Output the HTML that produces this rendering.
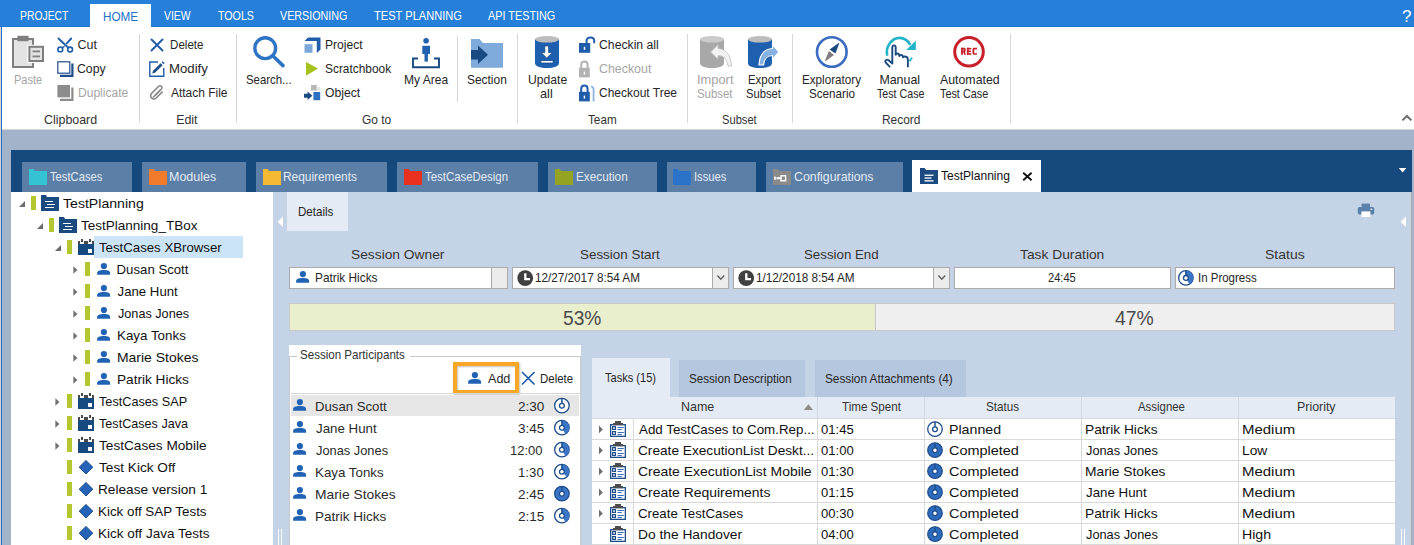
<!DOCTYPE html>
<html><head><meta charset="utf-8">
<style>
*{box-sizing:border-box;margin:0;padding:0}
html,body{width:1414px;height:545px;overflow:hidden;background:#a3b3c9;font-family:"Liberation Sans",sans-serif;color:#262626}
.a{position:absolute;display:block}
.t{position:absolute;white-space:nowrap;line-height:1}
</style></head><body>
<div class="a" style="left:0px;top:0px;width:1414px;height:26px;background:#2680da;"></div><div class="a" style="left:0px;top:26px;width:1414px;height:1px;background:#1c74d2;"></div><div class="a" style="left:90px;top:4px;width:61px;height:23px;background:#fff;"></div><div class="t" style="left:19.98px;top:9px;font-size:13.4px;color:#ffffff;font-weight:normal;transform:scaleX(0.7746);transform-origin:0 0">PROJECT</div><div class="t" style="left:164.40px;top:9px;font-size:13.4px;color:#ffffff;font-weight:normal;transform:scaleX(0.7735);transform-origin:0 0">VIEW</div><div class="t" style="left:218.10px;top:9px;font-size:13.4px;color:#ffffff;font-weight:normal;transform:scaleX(0.7956);transform-origin:0 0">TOOLS</div><div class="t" style="left:280.20px;top:9px;font-size:13.4px;color:#ffffff;font-weight:normal;transform:scaleX(0.8024);transform-origin:0 0">VERSIONING</div><div class="t" style="left:373.50px;top:9px;font-size:13.4px;color:#ffffff;font-weight:normal;transform:scaleX(0.8286);transform-origin:0 0">TEST PLANNING</div><div class="t" style="left:487.50px;top:9px;font-size:13.4px;color:#ffffff;font-weight:normal;transform:scaleX(0.8098);transform-origin:0 0">API TESTING</div><div class="t" style="left:102.87px;top:10px;font-size:13.4px;color:#2072c8;font-weight:normal;transform:scaleX(0.8756);transform-origin:0 0">HOME</div><div class="t" style="left:1402.11px;top:9px;font-size:15.7px;color:#ffffff;font-weight:normal;transform:scaleX(1.0857);transform-origin:0 0">?</div><div class="a" style="left:0px;top:27px;width:1414px;height:102px;background:#ffffff;"></div><div class="a" style="left:0px;top:129px;width:1414px;height:1px;background:#dad7d2;"></div><div class="a" style="left:139px;top:34px;width:1px;height:89px;background:#d6d6d6;"></div><div class="a" style="left:236px;top:34px;width:1px;height:89px;background:#d6d6d6;"></div><div class="a" style="left:457px;top:36px;width:1px;height:66px;background:#d6d6d6;"></div><div class="a" style="left:517px;top:34px;width:1px;height:89px;background:#d6d6d6;"></div><div class="a" style="left:687px;top:34px;width:1px;height:89px;background:#d6d6d6;"></div><div class="a" style="left:792px;top:34px;width:1px;height:89px;background:#d6d6d6;"></div><div class="a" style="left:1010px;top:34px;width:1px;height:89px;background:#d6d6d6;"></div><div class="t" style="left:43.50px;top:114px;font-size:12.4px;color:#333333;font-weight:normal;transform:scaleX(1.0020);transform-origin:0 0">Clipboard</div><div class="t" style="left:176.20px;top:114px;font-size:12.4px;color:#333333;font-weight:normal;transform:scaleX(1.0000);transform-origin:0 0">Edit</div><div class="t" style="left:361.63px;top:114px;font-size:12.4px;color:#333333;font-weight:normal;transform:scaleX(0.9655);transform-origin:0 0">Go to</div><div class="t" style="left:587.60px;top:114px;font-size:12.4px;color:#333333;font-weight:normal;transform:scaleX(0.9467);transform-origin:0 0">Team</div><div class="t" style="left:721.50px;top:114px;font-size:12.4px;color:#333333;font-weight:normal;transform:scaleX(0.9000);transform-origin:0 0">Subset</div><div class="t" style="left:882.04px;top:114px;font-size:12.4px;color:#333333;font-weight:normal;transform:scaleX(0.9632);transform-origin:0 0">Record</div><div class="t" style="left:77.50px;top:39px;font-size:12.5px;color:#262626;font-weight:normal;transform:scaleX(1.0000);transform-origin:0 0">Cut</div><div class="t" style="left:77.49px;top:63px;font-size:12.2px;color:#262626;font-weight:normal;transform:scaleX(1.0074);transform-origin:0 0">Copy</div><div class="t" style="left:77.64px;top:87px;font-size:12.5px;color:#a5a5a5;font-weight:normal;transform:scaleX(0.9647);transform-origin:0 0">Duplicate</div><div class="t" style="left:169.60px;top:39px;font-size:12.9px;color:#262626;font-weight:normal;transform:scaleX(0.9000);transform-origin:0 0">Delete</div><div class="t" style="left:169.43px;top:63px;font-size:12.4px;color:#262626;font-weight:normal;transform:scaleX(1.0657);transform-origin:0 0">Modify</div><div class="t" style="left:170.50px;top:87px;font-size:12.5px;color:#262626;font-weight:normal;transform:scaleX(0.9569);transform-origin:0 0">Attach File</div><div class="t" style="left:324.62px;top:39px;font-size:12.4px;color:#262626;font-weight:normal;transform:scaleX(0.9757);transform-origin:0 0">Project</div><div class="t" style="left:324.64px;top:63px;font-size:12.4px;color:#262626;font-weight:normal;transform:scaleX(0.9603);transform-origin:0 0">Scratchbook</div><div class="t" style="left:324.93px;top:87px;font-size:12.5px;color:#262626;font-weight:normal;transform:scaleX(0.9743);transform-origin:0 0">Object</div><div class="t" style="left:599.02px;top:39px;font-size:12.5px;color:#262626;font-weight:normal;transform:scaleX(0.9780);transform-origin:0 0">Checkin all</div><div class="t" style="left:599.00px;top:63px;font-size:12.4px;color:#a5a5a5;font-weight:normal;transform:scaleX(1.0000);transform-origin:0 0">Checkout</div><div class="t" style="left:599.04px;top:87px;font-size:12.5px;color:#262626;font-weight:normal;transform:scaleX(0.9600);transform-origin:0 0">Checkout Tree</div><div class="t" style="left:13.70px;top:74px;font-size:12.2px;color:#a5a5a5;font-weight:normal;transform:scaleX(0.9033);transform-origin:0 0">Paste</div><div class="t" style="left:246.30px;top:74px;font-size:12.6px;color:#262626;font-weight:normal;transform:scaleX(0.9042);transform-origin:0 0">Search...</div><div class="t" style="left:403.83px;top:74px;font-size:12.4px;color:#262626;font-weight:normal;transform:scaleX(0.9705);transform-origin:0 0">My Area</div><div class="t" style="left:467.14px;top:74px;font-size:12.4px;color:#262626;font-weight:normal;transform:scaleX(0.9625);transform-origin:0 0">Section</div><div class="t" style="left:527.52px;top:74px;font-size:12.4px;color:#262626;font-weight:normal;transform:scaleX(0.9816);transform-origin:0 0">Update</div><div class="t" style="left:540.27px;top:88px;font-size:12.4px;color:#262626;font-weight:normal;transform:scaleX(1.0273);transform-origin:0 0">all</div><div class="t" style="left:697.46px;top:74px;font-size:12.4px;color:#a5a5a5;font-weight:normal;transform:scaleX(1.0382);transform-origin:0 0">Import</div><div class="t" style="left:697.08px;top:88px;font-size:12.4px;color:#a5a5a5;font-weight:normal;transform:scaleX(0.9211);transform-origin:0 0">Subset</div><div class="t" style="left:747.78px;top:74px;font-size:12.4px;color:#262626;font-weight:normal;transform:scaleX(0.9200);transform-origin:0 0">Export</div><div class="t" style="left:746.49px;top:88px;font-size:12.4px;color:#262626;font-weight:normal;transform:scaleX(0.9053);transform-origin:0 0">Subset</div><div class="t" style="left:802.46px;top:74px;font-size:12.4px;color:#262626;font-weight:normal;transform:scaleX(0.9419);transform-origin:0 0">Exploratory</div><div class="t" style="left:809.36px;top:88px;font-size:12.4px;color:#262626;font-weight:normal;transform:scaleX(0.9404);transform-origin:0 0">Scenario</div><div class="t" style="left:879.40px;top:74px;font-size:12.4px;color:#262626;font-weight:normal;transform:scaleX(1.0000);transform-origin:0 0">Manual</div><div class="t" style="left:877.20px;top:88px;font-size:12.4px;color:#262626;font-weight:normal;transform:scaleX(0.8618);transform-origin:0 0">Test Case</div><div class="t" style="left:939.50px;top:74px;font-size:12.4px;color:#262626;font-weight:normal;transform:scaleX(0.9949);transform-origin:0 0">Automated</div><div class="t" style="left:939.50px;top:88px;font-size:12.4px;color:#262626;font-weight:normal;transform:scaleX(0.8745);transform-origin:0 0">Test Case</div><svg class="a" style="left:1401px;top:113px" width="12" height="9" viewBox="0 0 12 9"><path d="M1.4 7.4 L5.9 3 L10.4 7.4" fill="none" stroke="#6d6d6d" stroke-width="2"/></svg><svg class="a" style="left:11px;top:35px" width="34" height="34" viewBox="0 0 34 34">
<rect x="2" y="4" width="20" height="28" fill="#e3e3e3" stroke="#7f7f7f" stroke-width="2"/>
<rect x="6.4" y="0.8" width="11.2" height="5.4" fill="#7f7f7f"/>
<rect x="16.4" y="9.8" width="17.6" height="18.2" fill="#ffffff"/>
<rect x="18.4" y="11.8" width="13.6" height="14.2" fill="#e3e3e3" stroke="#7f7f7f" stroke-width="2"/>
<rect x="21.5" y="15.5" width="7.5" height="1.8" fill="#7f7f7f"/>
<rect x="21.5" y="20.5" width="7.5" height="1.8" fill="#7f7f7f"/>
</svg><svg class="a" style="left:56px;top:37px" width="18" height="17" viewBox="0 0 18 17">
<line x1="2.5" y1="1.5" x2="12.4" y2="10.8" stroke="#1f5caa" stroke-width="1.9" stroke-linecap="round"/>
<line x1="15.2" y1="1.5" x2="10.8" y2="6.3" stroke="#1f5caa" stroke-width="1.9" stroke-linecap="round"/>
<line x1="6.2" y1="10.6" x2="8.6" y2="9.4" stroke="#1f5caa" stroke-width="1.6"/>
<circle cx="4.3" cy="12.4" r="2.4" fill="#fff" stroke="#1f5caa" stroke-width="1.6"/>
<circle cx="14.1" cy="12.5" r="2.4" fill="#fff" stroke="#1f5caa" stroke-width="1.6"/>
</svg><svg class="a" style="left:56px;top:60px" width="18" height="18" viewBox="0 0 18 18">
<path d="M4 15.8 H16.4 V3.4" fill="none" stroke="#1f4e8c" stroke-width="2.2"/>
<rect x="1.8" y="1.8" width="12" height="11.4" fill="#fff" stroke="#1f4e8c" stroke-width="1.2"/>
</svg><svg class="a" style="left:56px;top:84px" width="18" height="18" viewBox="0 0 18 18">
<path d="M4 15.8 H16.4 V3.4" fill="none" stroke="#8c8c8c" stroke-width="2.2"/>
<rect x="1.4" y="1" width="12.6" height="12.4" fill="#8c8c8c"/>
</svg><svg class="a" style="left:150px;top:38px" width="14" height="14" viewBox="0 0 14 14"><path d="M1.5 1.5 L12.5 12.5 M12.5 1.5 L1.5 12.5" stroke="#1f5caa" stroke-width="1.9" stroke-linecap="round"/></svg><svg class="a" style="left:148px;top:60px" width="18" height="18" viewBox="0 0 18 18">
<path d="M10 2 H1.8 V16.2 H15.8 V8" fill="none" stroke="#1f5caa" stroke-width="1.4"/>
<path d="M4.2 13.6 L5 10.8 L12.6 3.2 L14.6 5.2 L7 12.8 Z" fill="#1f4e8c"/>
<path d="M13.6 2.2 L14.6 1.2 L16.6 3.2 L15.6 4.2 Z" fill="#1f4e8c"/>
</svg><svg class="a" style="left:149px;top:84px" width="16" height="17" viewBox="0 0 16 17">
<path d="M4 13.5 L12 5.5 C13.5 4 13 1.8 11.2 1.8 C10.4 1.8 9.8 2.2 9.2 2.8 L2.6 9.4 C1.2 10.8 1.4 13 2.8 14.2 C4.2 15.4 6 15.2 7.2 14 L13.6 7.6" fill="none" stroke="#8a8a8a" stroke-width="1.6"/>
<path d="M5.8 11.6 L11 6.4" fill="none" stroke="#8a8a8a" stroke-width="1.6"/>
</svg><svg class="a" style="left:252px;top:35px" width="34" height="34" viewBox="0 0 34 34">
<circle cx="13.2" cy="13.2" r="10.4" fill="none" stroke="#2e74c4" stroke-width="3.4"/>
<line x1="21" y1="21" x2="31" y2="30.6" stroke="#2e74c4" stroke-width="3.6" stroke-linecap="round"/>
</svg><svg class="a" style="left:304px;top:37px" width="17" height="17" viewBox="0 0 17 17">
<path d="M0.5 4 L4 0.5 H16.5 V12.5 L12.8 16 V4 Z" fill="#1f5caa"/>
<rect x="0.5" y="7.2" width="8" height="8.6" fill="#7ea8da"/>
</svg><svg class="a" style="left:305px;top:61px" width="14" height="16" viewBox="0 0 14 16"><path d="M1 1 L13 7.5 L1 14.8 Z" fill="#a5c21c"/></svg><svg class="a" style="left:303px;top:84px" width="18" height="18" viewBox="0 0 18 18">
<rect x="8" y="1" width="5.8" height="5.6" fill="#b8b8b8"/>
<rect x="13.8" y="3" width="3.4" height="3.6" fill="#ece5dd"/>
<rect x="10.4" y="8" width="6.8" height="8.2" fill="#2d6fc0"/>
<path d="M1 9.8 H4.6 V7.6 L9.4 11.8 L4.6 16 V13.8 H1 Z" fill="#1a4a80"/>
</svg><svg class="a" style="left:410px;top:37px" width="32" height="33" viewBox="0 0 32 33">
<circle cx="16.1" cy="3.8" r="2.8" fill="#2060b0"/>
<rect x="12.3" y="8.8" width="7.7" height="8.2" fill="#2060b0"/>
<rect x="14.5" y="15" width="3.4" height="9.6" fill="#2060b0"/>
<path d="M8 21.5 H3 V30.2 H29 V21.5 H24" fill="none" stroke="#1a4a80" stroke-width="1.9"/>
</svg><svg class="a" style="left:470px;top:37px" width="34" height="33" viewBox="0 0 34 33">
<path d="M1 2 H9.5 L13 6 H33 V30.8 H1 Z" fill="#7eaadc"/>
<path d="M1 13 H8 V8.6 L18 17.8 L8 27 V22.6 H1 Z" fill="#1a4a80"/>
</svg><svg class="a" style="left:533px;top:35px" width="28" height="34" viewBox="0 0 28 34">
<path d="M2 4 V28 C2 31.5 7 33 14 33 C21 33 26 31.5 26 28 V4 Z" fill="#1f5fb0"/>
<ellipse cx="14" cy="4.3" rx="12" ry="3.3" fill="#bdbdbd"/>
<path d="M11.8 10.9 H15.6 V17.6 H19.4 L13.7 23 L8 17.6 H11.8 Z" fill="#fff" stroke="#174a86" stroke-width="0.8"/>
<rect x="7.9" y="25.6" width="12.2" height="2.4" fill="#fff" stroke="#174a86" stroke-width="0.8"/>
</svg><svg class="a" style="left:578px;top:36px" width="18" height="18" viewBox="0 0 18 18">
<rect x="1" y="7" width="11.2" height="9.8" fill="#1f5caa"/>
<path d="M8.6 7.5 V4.8 C8.6 2.6 10.2 1.4 12.4 1.4 C14.6 1.4 16.2 2.6 16.2 4.8 V7.2" fill="none" stroke="#1f5caa" stroke-width="2"/>
<rect x="5.8" y="10.8" width="1.4" height="3" fill="#fff"/>
</svg><svg class="a" style="left:578px;top:60px" width="18" height="18" viewBox="0 0 18 18">
<rect x="1" y="7.8" width="10.8" height="9.6" fill="#b3b3b3"/>
<path d="M3.2 8 V5 C3.2 2.8 4.4 1.6 6.4 1.6 C8.4 1.6 9.6 2.8 9.6 5 V8" fill="none" stroke="#b3b3b3" stroke-width="2"/>
<rect x="5.7" y="11.6" width="1.4" height="3" fill="#fff"/>
</svg><svg class="a" style="left:578px;top:84px" width="18" height="18" viewBox="0 0 18 18">
<rect x="1" y="7.8" width="10.8" height="9.6" fill="#1f5caa"/>
<path d="M3.2 8 V5 C3.2 2.8 4.4 1.6 6.4 1.6 C8.4 1.6 9.6 2.8 9.6 5 V8" fill="none" stroke="#1f5caa" stroke-width="2"/>
<rect x="5.7" y="11.6" width="1.4" height="3" fill="#fff"/>
<path d="M13 2.4 C14.6 2.6 15.6 3.4 15.6 5.6 V17.4" fill="none" stroke="#8db4e2" stroke-width="1.8"/>
</svg><svg class="a" style="left:698px;top:35px" width="36" height="34" viewBox="0 0 36 34">
<path d="M2 4 V28 C2 31.5 7 33 14 33 C21 33 26 31.5 26 28 V4 Z" fill="#a8a8a8"/>
<ellipse cx="14" cy="4.3" rx="12" ry="3.3" fill="#cacaca"/>
<path d="M12.6 17 L20 9.8 V13.6 C28 14 33 20 33.5 31 H30 C29 24 25.5 20.5 20 20.5 V24.2 Z" fill="#f2f2f2" stroke="#c4c4c4" stroke-width="0.9"/>
</svg><svg class="a" style="left:746px;top:35px" width="36" height="34" viewBox="0 0 36 34">
<path d="M2 4 V28 C2 31.5 7 33 14 33 C21 33 26 31.5 26 28 V4 Z" fill="#1f5fb0"/>
<ellipse cx="14" cy="4.3" rx="12" ry="3.3" fill="#bdbdbd"/>
<path d="M26.5 9.5 L33 17 L26.5 24.5 V20.5 C21 20.5 18.5 23 17.5 30 H13 C13.5 20 18 14 26.5 13.5 Z" fill="#86b2e3" stroke="#ffffff" stroke-width="1.2"/>
</svg><svg class="a" style="left:814px;top:35px" width="36" height="34" viewBox="0 0 36 34">
<circle cx="17.8" cy="17" r="14.8" fill="none" stroke="#3a6cc0" stroke-width="2.6"/>
<path d="M15.6 14.6 L24.4 8.2 C25 7.9 25.3 8.3 25.1 8.8 L21.4 18.6 Z" fill="#1a4a80"/>
<path d="M14.9 15.9 L20 20 L11.8 25.9 C11.2 26.2 10.9 25.8 11.1 25.2 Z" fill="#807b7e"/>
</svg><svg class="a" style="left:884px;top:36px" width="34" height="34" viewBox="0 0 34 34">
<path d="M3.2 19.8 C1.2 11 7.6 2 15.6 1.9 C19.8 1.9 23.6 4.2 26.3 8.8" fill="none" stroke="#22b3c6" stroke-width="2.6"/>
<path d="M31.8 4.8 V14 H22.2 Z" fill="#22b3c6"/>
<path d="M25.5 25.3 L28.1 21.7" stroke="#22b3c6" stroke-width="1.8"/>
<path d="M6.1 31.2 L1.8 26.6 C0.9 25.6 1.6 23.6 3.2 23.6 C3.8 23.6 4.3 23.9 4.7 24.3 L8.3 27.6 V11.4 C8.3 10.2 9 9.4 10 9.4 C11 9.4 11.7 10.2 11.7 11.4 V18.8 C11.9 17.9 12.6 17.5 13.4 17.5 C14.4 17.5 15 18.2 15.2 19.2 L15.3 20 C15.6 19.3 16.2 19 17 19 C18 19 18.8 19.7 19 20.6 L19.1 21.4 C19.4 20.8 20 20.5 20.8 20.5 C22.3 20.5 23.8 21.6 23.9 23.4 V31.2" fill="none" stroke="#1a4a80" stroke-width="1.9" stroke-linejoin="round"/>
</svg><svg class="a" style="left:952px;top:35px" width="34" height="34" viewBox="0 0 34 34">
<circle cx="17" cy="16.8" r="14.3" fill="none" stroke="#c8202a" stroke-width="3"/>
<g fill="#c8202a"><rect x="9.1" y="12.8" width="1.8" height="7"/><path d="M9.1 12.8 H12.2 C13.2 12.8 13.7 13.4 13.7 14.4 V15.4 C13.7 16.6 13.1 17.2 12.1 17.2 H9.1 V15.6 H11.9 V14.4 H9.1 Z"/><path d="M11.2 16.8 H13 L13.9 19.8 H12.1 Z"/><rect x="14.9" y="12.8" width="1.8" height="7"/><rect x="14.9" y="12.8" width="4.4" height="1.6"/><rect x="14.9" y="15.5" width="4.1" height="1.5"/><rect x="14.9" y="18.2" width="4.4" height="1.6"/><path d="M25 12.8 V14.4 H22.6 C22.4 14.4 22.3 14.5 22.3 14.8 V17.8 C22.3 18.1 22.4 18.2 22.6 18.2 H25 V19.8 H22.2 C21.1 19.8 20.5 19.2 20.5 18.1 V14.5 C20.5 13.4 21.1 12.8 22.2 12.8 Z"/></g>
</svg><div class="a" style="left:0px;top:27px;width:1px;height:518px;background:#ddd1c6;"></div><div class="a" style="left:1px;top:26px;width:1px;height:519px;background:#1a73d3;"></div><div class="a" style="left:11px;top:150px;width:1401px;height:42px;background:#164a7e;"></div><div class="a" style="left:22px;top:162px;width:110px;height:30px;background:#5b7fa7;"></div><svg class="a" style="left:28px;top:168px" width="20" height="18" viewBox="0 0 20 18"><path d="M1 1 H5.5 L7.2 2.9 H19 V17 H1 Z" fill="#33c3d3"/></svg><div class="t" style="left:50.20px;top:170px;font-size:13.4px;color:#e4ebf4;font-weight:normal;transform:scaleX(0.8371);transform-origin:0 0">TestCases</div><div class="a" style="left:142px;top:162px;width:103.5px;height:30px;background:#5b7fa7;"></div><svg class="a" style="left:148px;top:168px" width="20" height="18" viewBox="0 0 20 18"><path d="M1 1 H5.5 L7.2 2.9 H19 V17 H1 Z" fill="#f27b2b"/></svg><div class="t" style="left:169.37px;top:170px;font-size:13.4px;color:#e4ebf4;font-weight:normal;transform:scaleX(0.9327);transform-origin:0 0">Modules</div><div class="a" style="left:256px;top:162px;width:131px;height:30px;background:#5b7fa7;"></div><svg class="a" style="left:262px;top:168px" width="20" height="18" viewBox="0 0 20 18"><path d="M1 1 H5.5 L7.2 2.9 H19 V17 H1 Z" fill="#f6b933"/></svg><div class="t" style="left:283.41px;top:170px;font-size:13.4px;color:#e4ebf4;font-weight:normal;transform:scaleX(0.8866);transform-origin:0 0">Requirements</div><div class="a" style="left:397px;top:162px;width:140.60000000000002px;height:30px;background:#5b7fa7;"></div><svg class="a" style="left:403px;top:168px" width="20" height="18" viewBox="0 0 20 18"><path d="M1 1 H5.5 L7.2 2.9 H19 V17 H1 Z" fill="#e8321f"/></svg><div class="t" style="left:425.30px;top:170px;font-size:13.4px;color:#e4ebf4;font-weight:normal;transform:scaleX(0.8515);transform-origin:0 0">TestCaseDesign</div><div class="a" style="left:548.3px;top:162px;width:108.40000000000009px;height:30px;background:#5b7fa7;"></div><svg class="a" style="left:554px;top:168px" width="20" height="18" viewBox="0 0 20 18"><path d="M1 1 H5.5 L7.2 2.9 H19 V17 H1 Z" fill="#95a323"/></svg><div class="t" style="left:575.72px;top:170px;font-size:13.4px;color:#e4ebf4;font-weight:normal;transform:scaleX(0.8789);transform-origin:0 0">Execution</div><div class="a" style="left:667px;top:162px;width:88.70000000000005px;height:30px;background:#5b7fa7;"></div><svg class="a" style="left:672px;top:168px" width="20" height="18" viewBox="0 0 20 18"><path d="M1 1 H5.5 L7.2 2.9 H19 V17 H1 Z" fill="#2b73c8"/></svg><div class="t" style="left:694.07px;top:170px;font-size:13.4px;color:#e4ebf4;font-weight:normal;transform:scaleX(0.8324);transform-origin:0 0">Issues</div><div class="a" style="left:766px;top:162px;width:137px;height:30px;background:#5b7fa7;"></div><svg class="a" style="left:772px;top:168px" width="20" height="18" viewBox="0 0 20 18"><path d="M1 1 H5.5 L7.2 2.9 H19 V17 H1 Z" fill="#8a8a8a"/><rect x="4.5" y="9.2" width="4.5" height="2" fill="#fff"/><rect x="9" y="7.8" width="4.6" height="5" fill="none" stroke="#fff" stroke-width="1.4"/><rect x="2.2" y="8.6" width="1.6" height="3.2" fill="#fff"/></svg><div class="t" style="left:793.58px;top:170px;font-size:13.4px;color:#e4ebf4;font-weight:normal;transform:scaleX(0.9212);transform-origin:0 0">Configurations</div><div class="a" style="left:912px;top:160px;width:129px;height:32px;background:#ffffff;"></div><svg class="a" style="left:919px;top:167px" width="20" height="18" viewBox="0 0 20 18"><path d="M1 1 H5.5 L7.2 2.9 H19 V17 H1 Z" fill="#1a4a80"/><rect x="5.5" y="7.6" width="9" height="1.3" fill="#fff"/><rect x="5.5" y="10.4" width="7" height="1.3" fill="#fff"/><rect x="5.5" y="13.2" width="9" height="1.3" fill="#fff"/></svg><div class="t" style="left:941.20px;top:169px;font-size:13.1px;color:#111111;font-weight:normal;transform:scaleX(0.9189);transform-origin:0 0">TestPlanning</div><svg class="a" style="left:1022px;top:172px" width="11" height="9" viewBox="0 0 11 9"><path d="M1.2 0.8 L9.6 8.2 M9.6 0.8 L1.2 8.2" stroke="#111" stroke-width="1.9"/></svg><svg class="a" style="left:1398px;top:167px" width="10" height="7" viewBox="0 0 10 7"><path d="M0.8 1 H8.4 L4.6 5.6 Z" fill="#ffffff"/></svg><div class="a" style="left:11px;top:192px;width:262px;height:353px;background:#ffffff;"></div><div class="a" style="left:273px;top:192px;width:1138px;height:353px;background:#c5d3e6;"></div><div class="a" style="left:1411px;top:192px;width:1px;height:353px;background:#a9a9a9;"></div><div class="a" style="left:1412px;top:192px;width:2px;height:353px;background:#a3b3c9;"></div><svg class="a" style="left:19px;top:200px" width="7" height="8" viewBox="0 0 7 8"><path d="M6 1 V7 H0 Z" fill="#6b6b6b"/></svg><div class="a" style="left:31px;top:196px;width:5px;height:14px;background:#b4c72f;"></div><svg class="a" style="left:41px;top:195px" width="18" height="16" viewBox="0 0 18 16"><path d="M0 0 H5 L6 2 H18 V16 H0 Z" fill="#1a4a80"/><rect x="4" y="6" width="8" height="1" fill="#fff"/><rect x="6" y="9" width="8" height="1" fill="#fff"/><rect x="4" y="12" width="9" height="1" fill="#fff"/></svg><div class="t" style="left:62.90px;top:197px;font-size:13.2px;color:#111111;font-weight:normal;transform:scaleX(1.0693);transform-origin:0 0">TestPlanning</div><svg class="a" style="left:37px;top:222px" width="7" height="8" viewBox="0 0 7 8"><path d="M6 1 V7 H0 Z" fill="#6b6b6b"/></svg><div class="a" style="left:49px;top:218px;width:5px;height:14px;background:#b4c72f;"></div><svg class="a" style="left:59px;top:217px" width="18" height="16" viewBox="0 0 18 16"><path d="M0 0 H5 L6 2 H18 V16 H0 Z" fill="#1a4a80"/><rect x="4" y="6" width="8" height="1" fill="#fff"/><rect x="6" y="9" width="8" height="1" fill="#fff"/><rect x="4" y="12" width="9" height="1" fill="#fff"/></svg><div class="t" style="left:81.20px;top:219px;font-size:13.2px;color:#111111;font-weight:normal;transform:scaleX(1.0248);transform-origin:0 0">TestPlanning_TBox</div><div class="a" style="left:94px;top:236px;width:149px;height:22px;background:#cce4f7;"></div><svg class="a" style="left:55px;top:244px" width="7" height="8" viewBox="0 0 7 8"><path d="M6 1 V7 H0 Z" fill="#6b6b6b"/></svg><div class="a" style="left:67px;top:240px;width:5px;height:14px;background:#b4c72f;"></div><svg class="a" style="left:78px;top:239px" width="16" height="16" viewBox="0 0 16 16"><rect x="0" y="5" width="16" height="11" fill="#174a80"/><rect x="0" y="2" width="2" height="3" fill="#4a4a4a"/><rect x="6" y="2" width="4" height="3" fill="#4a4a4a"/><rect x="14" y="2" width="2" height="3" fill="#4a4a4a"/><rect x="3" y="0" width="2" height="3" fill="#4a4a4a"/><rect x="11" y="0" width="2" height="3" fill="#4a4a4a"/><rect x="10" y="10" width="4" height="4" fill="#fff"/></svg><div class="t" style="left:99.20px;top:241px;font-size:13.2px;color:#111111;font-weight:normal;transform:scaleX(1.0025);transform-origin:0 0">TestCases XBrowser</div><svg class="a" style="left:73px;top:265px" width="6" height="10" viewBox="0 0 6 10"><path d="M0.4 1.2 L4.4 5 L0.4 8.8 Z" fill="#707070"/></svg><div class="a" style="left:85px;top:262px;width:5px;height:14px;background:#b4c72f;"></div><svg class="a" style="left:97px;top:261px" width="14" height="16" viewBox="0 0 14 16"><circle cx="6.9" cy="5.1" r="3.1" fill="#2262b4"/><path d="M0.1 12.4 C0.1 10 2.4 9 6.9 9 C11.4 9 13.1 10 13.1 12.4 V13.8 H0.1 Z" fill="#2262b4"/></svg><div class="t" style="left:116.60px;top:263px;font-size:13.2px;color:#111111;font-weight:normal;transform:scaleX(1.0000);transform-origin:0 0">Dusan Scott</div><svg class="a" style="left:73px;top:287px" width="6" height="10" viewBox="0 0 6 10"><path d="M0.4 1.2 L4.4 5 L0.4 8.8 Z" fill="#707070"/></svg><div class="a" style="left:85px;top:284px;width:5px;height:14px;background:#b4c72f;"></div><svg class="a" style="left:97px;top:283px" width="14" height="16" viewBox="0 0 14 16"><circle cx="6.9" cy="5.1" r="3.1" fill="#2262b4"/><path d="M0.1 12.4 C0.1 10 2.4 9 6.9 9 C11.4 9 13.1 10 13.1 12.4 V13.8 H0.1 Z" fill="#2262b4"/></svg><div class="t" style="left:117.60px;top:285px;font-size:13.2px;color:#111111;font-weight:normal;transform:scaleX(1.0000);transform-origin:0 0">Jane Hunt</div><svg class="a" style="left:73px;top:309px" width="6" height="10" viewBox="0 0 6 10"><path d="M0.4 1.2 L4.4 5 L0.4 8.8 Z" fill="#707070"/></svg><div class="a" style="left:85px;top:306px;width:5px;height:14px;background:#b4c72f;"></div><svg class="a" style="left:97px;top:305px" width="14" height="16" viewBox="0 0 14 16"><circle cx="6.9" cy="5.1" r="3.1" fill="#2262b4"/><path d="M0.1 12.4 C0.1 10 2.4 9 6.9 9 C11.4 9 13.1 10 13.1 12.4 V13.8 H0.1 Z" fill="#2262b4"/></svg><div class="t" style="left:117.60px;top:307px;font-size:13.2px;color:#111111;font-weight:normal;transform:scaleX(0.9595);transform-origin:0 0">Jonas Jones</div><svg class="a" style="left:73px;top:331px" width="6" height="10" viewBox="0 0 6 10"><path d="M0.4 1.2 L4.4 5 L0.4 8.8 Z" fill="#707070"/></svg><div class="a" style="left:85px;top:328px;width:5px;height:14px;background:#b4c72f;"></div><svg class="a" style="left:97px;top:327px" width="14" height="16" viewBox="0 0 14 16"><circle cx="6.9" cy="5.1" r="3.1" fill="#2262b4"/><path d="M0.1 12.4 C0.1 10 2.4 9 6.9 9 C11.4 9 13.1 10 13.1 12.4 V13.8 H0.1 Z" fill="#2262b4"/></svg><div class="t" style="left:116.59px;top:329px;font-size:13.2px;color:#111111;font-weight:normal;transform:scaleX(1.0136);transform-origin:0 0">Kaya Tonks</div><svg class="a" style="left:73px;top:353px" width="6" height="10" viewBox="0 0 6 10"><path d="M0.4 1.2 L4.4 5 L0.4 8.8 Z" fill="#707070"/></svg><div class="a" style="left:85px;top:350px;width:5px;height:14px;background:#b4c72f;"></div><svg class="a" style="left:97px;top:349px" width="14" height="16" viewBox="0 0 14 16"><circle cx="6.9" cy="5.1" r="3.1" fill="#2262b4"/><path d="M0.1 12.4 C0.1 10 2.4 9 6.9 9 C11.4 9 13.1 10 13.1 12.4 V13.8 H0.1 Z" fill="#2262b4"/></svg><div class="t" style="left:116.54px;top:351px;font-size:13.2px;color:#111111;font-weight:normal;transform:scaleX(1.0573);transform-origin:0 0">Marie Stokes</div><svg class="a" style="left:73px;top:375px" width="6" height="10" viewBox="0 0 6 10"><path d="M0.4 1.2 L4.4 5 L0.4 8.8 Z" fill="#707070"/></svg><div class="a" style="left:85px;top:372px;width:5px;height:14px;background:#b4c72f;"></div><svg class="a" style="left:97px;top:371px" width="14" height="16" viewBox="0 0 14 16"><circle cx="6.9" cy="5.1" r="3.1" fill="#2262b4"/><path d="M0.1 12.4 C0.1 10 2.4 9 6.9 9 C11.4 9 13.1 10 13.1 12.4 V13.8 H0.1 Z" fill="#2262b4"/></svg><div class="t" style="left:116.57px;top:373px;font-size:13.2px;color:#111111;font-weight:normal;transform:scaleX(1.0324);transform-origin:0 0">Patrik Hicks</div><svg class="a" style="left:55px;top:397px" width="6" height="10" viewBox="0 0 6 10"><path d="M0.4 1.2 L4.4 5 L0.4 8.8 Z" fill="#707070"/></svg><div class="a" style="left:67px;top:394px;width:5px;height:14px;background:#b4c72f;"></div><svg class="a" style="left:78px;top:393px" width="16" height="16" viewBox="0 0 16 16"><rect x="0" y="5" width="16" height="11" fill="#174a80"/><rect x="0" y="2" width="2" height="3" fill="#4a4a4a"/><rect x="6" y="2" width="4" height="3" fill="#4a4a4a"/><rect x="14" y="2" width="2" height="3" fill="#4a4a4a"/><rect x="3" y="0" width="2" height="3" fill="#4a4a4a"/><rect x="11" y="0" width="2" height="3" fill="#4a4a4a"/><rect x="10" y="10" width="4" height="4" fill="#fff"/></svg><div class="t" style="left:99.20px;top:395px;font-size:13.2px;color:#111111;font-weight:normal;transform:scaleX(0.9615);transform-origin:0 0">TestCases SAP</div><svg class="a" style="left:55px;top:419px" width="6" height="10" viewBox="0 0 6 10"><path d="M0.4 1.2 L4.4 5 L0.4 8.8 Z" fill="#707070"/></svg><div class="a" style="left:67px;top:416px;width:5px;height:14px;background:#b4c72f;"></div><svg class="a" style="left:78px;top:415px" width="16" height="16" viewBox="0 0 16 16"><rect x="0" y="5" width="16" height="11" fill="#174a80"/><rect x="0" y="2" width="2" height="3" fill="#4a4a4a"/><rect x="6" y="2" width="4" height="3" fill="#4a4a4a"/><rect x="14" y="2" width="2" height="3" fill="#4a4a4a"/><rect x="3" y="0" width="2" height="3" fill="#4a4a4a"/><rect x="11" y="0" width="2" height="3" fill="#4a4a4a"/><rect x="10" y="10" width="4" height="4" fill="#fff"/></svg><div class="t" style="left:99.20px;top:417px;font-size:13.2px;color:#111111;font-weight:normal;transform:scaleX(0.9570);transform-origin:0 0">TestCases Java</div><svg class="a" style="left:55px;top:441px" width="6" height="10" viewBox="0 0 6 10"><path d="M0.4 1.2 L4.4 5 L0.4 8.8 Z" fill="#707070"/></svg><div class="a" style="left:67px;top:438px;width:5px;height:14px;background:#b4c72f;"></div><svg class="a" style="left:78px;top:437px" width="16" height="16" viewBox="0 0 16 16"><rect x="0" y="5" width="16" height="11" fill="#174a80"/><rect x="0" y="2" width="2" height="3" fill="#4a4a4a"/><rect x="6" y="2" width="4" height="3" fill="#4a4a4a"/><rect x="14" y="2" width="2" height="3" fill="#4a4a4a"/><rect x="3" y="0" width="2" height="3" fill="#4a4a4a"/><rect x="11" y="0" width="2" height="3" fill="#4a4a4a"/><rect x="10" y="10" width="4" height="4" fill="#fff"/></svg><div class="t" style="left:99.20px;top:439px;font-size:13.2px;color:#111111;font-weight:normal;transform:scaleX(1.0337);transform-origin:0 0">TestCases Mobile</div><div class="a" style="left:67px;top:460px;width:5px;height:14px;background:#b4c72f;"></div><svg class="a" style="left:78px;top:459px" width="16" height="17" viewBox="0 0 16 17"><path d="M8 1.4 L14.9 8.2 L8 15 L1.1 8.2 Z" fill="#2563b8" stroke="#1a4a80" stroke-width="0.9"/></svg><div class="t" style="left:99.20px;top:461px;font-size:13.2px;color:#111111;font-weight:normal;transform:scaleX(1.0338);transform-origin:0 0">Test Kick Off</div><div class="a" style="left:67px;top:482px;width:5px;height:14px;background:#b4c72f;"></div><svg class="a" style="left:78px;top:481px" width="16" height="17" viewBox="0 0 16 17"><path d="M8 1.4 L14.9 8.2 L8 15 L1.1 8.2 Z" fill="#2563b8" stroke="#1a4a80" stroke-width="0.9"/></svg><div class="t" style="left:98.16px;top:483px;font-size:13.2px;color:#111111;font-weight:normal;transform:scaleX(1.0356);transform-origin:0 0">Release version 1</div><div class="a" style="left:67px;top:504px;width:5px;height:14px;background:#b4c72f;"></div><svg class="a" style="left:78px;top:503px" width="16" height="17" viewBox="0 0 16 17"><path d="M8 1.4 L14.9 8.2 L8 15 L1.1 8.2 Z" fill="#2563b8" stroke="#1a4a80" stroke-width="0.9"/></svg><div class="t" style="left:98.19px;top:505px;font-size:13.2px;color:#111111;font-weight:normal;transform:scaleX(1.0142);transform-origin:0 0">Kick off SAP Tests</div><div class="a" style="left:67px;top:526px;width:5px;height:14px;background:#b4c72f;"></div><svg class="a" style="left:78px;top:525px" width="16" height="17" viewBox="0 0 16 17"><path d="M8 1.4 L14.9 8.2 L8 15 L1.1 8.2 Z" fill="#2563b8" stroke="#1a4a80" stroke-width="0.9"/></svg><div class="t" style="left:98.17px;top:527px;font-size:13.2px;color:#111111;font-weight:normal;transform:scaleX(1.0262);transform-origin:0 0">Kick off Java Tests</div><div class="a" style="left:278px;top:529px;width:1px;height:16px;background:#ffffff;"></div><div class="a" style="left:281px;top:529px;width:1px;height:16px;background:#ffffff;"></div><svg class="a" style="left:277px;top:216px" width="7" height="12" viewBox="0 0 7 12"><path d="M6 0.6 V11 L0.6 5.8 Z" fill="#ffffff"/></svg><svg class="a" style="left:1400px;top:216px" width="7" height="12" viewBox="0 0 7 12"><path d="M6 0.6 V11 L0.6 5.8 Z" fill="#ffffff"/></svg><div class="a" style="left:287px;top:192px;width:61px;height:39px;background:#e5ebf4;"></div><div class="t" style="left:298.42px;top:205px;font-size:13.1px;color:#262626;font-weight:normal;transform:scaleX(0.8846);transform-origin:0 0">Details</div><svg class="a" style="left:1357px;top:203px" width="18" height="15" viewBox="0 0 18 15"><rect x="4.6" y="0.6" width="8.4" height="3.6" fill="#5b80aa"/><rect x="0.8" y="4" width="16.4" height="7.4" rx="1.6" fill="#5b80aa"/><rect x="4.4" y="8.4" width="9" height="5.6" fill="#ffffff"/><rect x="13.6" y="5.6" width="1.6" height="1.2" fill="#fff"/></svg><div class="t" style="left:350.91px;top:249px;font-size:12.6px;color:#333333;font-weight:normal;transform:scaleX(1.0940);transform-origin:0 0">Session Owner</div><div class="t" style="left:579.64px;top:249px;font-size:12.6px;color:#333333;font-weight:normal;transform:scaleX(1.0649);transform-origin:0 0">Session Start</div><div class="t" style="left:803.94px;top:249px;font-size:12.6px;color:#333333;font-weight:normal;transform:scaleX(1.0551);transform-origin:0 0">Session End</div><div class="t" style="left:1020.00px;top:249px;font-size:12.6px;color:#333333;font-weight:normal;transform:scaleX(1.0947);transform-origin:0 0">Task Duration</div><div class="t" style="left:1264.89px;top:249px;font-size:12.6px;color:#333333;font-weight:normal;transform:scaleX(1.1118);transform-origin:0 0">Status</div><div class="a" style="left:289px;top:267px;width:203px;height:22px;background:#ffffff;border:1px solid #ababab"></div><div class="a" style="left:491px;top:267px;width:17px;height:22px;background:#ececec;border:1px solid #ababab"></div><div class="a" style="left:512px;top:267px;width:201px;height:22px;background:#ffffff;border:1px solid #ababab"></div><div class="a" style="left:712px;top:267px;width:17px;height:22px;background:#ececec;border:1px solid #ababab"></div><div class="a" style="left:733px;top:267px;width:201px;height:22px;background:#ffffff;border:1px solid #ababab"></div><div class="a" style="left:933px;top:267px;width:17px;height:22px;background:#ececec;border:1px solid #ababab"></div><div class="a" style="left:954px;top:267px;width:217px;height:22px;background:#ffffff;border:1px solid #ababab"></div><div class="a" style="left:1175px;top:267px;width:220px;height:22px;background:#ffffff;border:1px solid #ababab"></div><svg class="a" style="left:716px;top:274px" width="10" height="8" viewBox="0 0 10 8"><path d="M1.4 1.6 L4.8 5.2 L8.2 1.6" fill="none" stroke="#606060" stroke-width="1.4"/></svg><svg class="a" style="left:937px;top:274px" width="10" height="8" viewBox="0 0 10 8"><path d="M1.4 1.6 L4.8 5.2 L8.2 1.6" fill="none" stroke="#606060" stroke-width="1.4"/></svg><svg class="a" style="left:296px;top:269px" width="14" height="16" viewBox="0 0 14 16"><circle cx="6.9" cy="5.1" r="3.1" fill="#2262b4"/><path d="M0.1 12.4 C0.1 10 2.4 9 6.9 9 C11.4 9 13.1 10 13.1 12.4 V13.8 H0.1 Z" fill="#2262b4"/></svg><div class="t" style="left:314.86px;top:272px;font-size:12.6px;color:#262626;font-weight:normal;transform:scaleX(0.9400);transform-origin:0 0">Patrik Hicks</div><svg class="a" style="left:517px;top:270px" width="17" height="17" viewBox="0 0 17 17"><circle cx="8.2" cy="8.1" r="7.9" fill="#404040"/><path d="M8.3 3.2 V9.2 H13" fill="none" stroke="#fff" stroke-width="2.3"/></svg><div class="t" style="left:535.27px;top:272px;font-size:12.6px;color:#262626;font-weight:normal;transform:scaleX(0.9306);transform-origin:0 0">12/27/2017 8:54 AM</div><svg class="a" style="left:738px;top:270px" width="17" height="17" viewBox="0 0 17 17"><circle cx="8.2" cy="8.1" r="7.9" fill="#404040"/><path d="M8.3 3.2 V9.2 H13" fill="none" stroke="#fff" stroke-width="2.3"/></svg><div class="t" style="left:756.47px;top:272px;font-size:12.6px;color:#262626;font-weight:normal;transform:scaleX(0.9327);transform-origin:0 0">1/12/2018 8:54 AM</div><div class="t" style="left:1048.32px;top:272px;font-size:12.6px;color:#262626;font-weight:normal;transform:scaleX(0.8800);transform-origin:0 0">24:45</div><svg class="a" style="left:1177px;top:269px" width="17" height="17" viewBox="0 0 17 17"><circle cx="8.90" cy="8.90" r="7.25" fill="#fff" stroke="#1f4e8c" stroke-width="1.3"/><path d="M8.90 8.90 V1.65 A7.25 7.25 0 0 1 12.39 15.25 Z" fill="#3a75c8"/><circle cx="8.90" cy="8.90" r="2.4" fill="#fff" stroke="#1f4e8c" stroke-width="1.3"/><rect x="8.15" y="1.30" width="1.5" height="5.30" fill="#1f4e8c"/></svg><div class="t" style="left:1198.29px;top:272px;font-size:12.6px;color:#262626;font-weight:normal;transform:scaleX(0.9111);transform-origin:0 0">In Progress</div><div class="a" style="left:289px;top:303px;width:1106px;height:28px;background:#efefef;border:1px solid #c9c9c9"></div><div class="a" style="left:290px;top:304px;width:586px;height:26px;background:#e9efcd;"></div><div class="a" style="left:875px;top:304px;width:1px;height:26px;background:#c9c9c9;"></div><div class="t" style="left:563.05px;top:308px;font-size:20.3px;color:#4a4a4a;font-weight:normal;transform:scaleX(0.9462);transform-origin:0 0">53%</div><div class="t" style="left:1114.60px;top:308px;font-size:20.3px;color:#4a4a4a;font-weight:normal;transform:scaleX(0.9550);transform-origin:0 0">47%</div><div class="a" style="left:289px;top:345px;width:292px;height:11px;background:#ffffff;"></div><div class="a" style="left:289px;top:356px;width:292px;height:189px;background:#ffffff;"></div><div class="a" style="left:580px;top:357px;width:1px;height:188px;background:#c5d3e6;"></div><div class="a" style="left:289px;top:356px;width:8px;height:1px;background:#cacaca;"></div><div class="a" style="left:410px;top:356px;width:171px;height:1px;background:#cacaca;"></div><div class="a" style="left:289px;top:356px;width:1px;height:189px;background:#cacaca;"></div><div class="a" style="left:580px;top:356px;width:1px;height:189px;background:#cacaca;"></div><div class="t" style="left:300.18px;top:349px;font-size:12.6px;color:#333333;font-weight:normal;transform:scaleX(0.9186);transform-origin:0 0">Session Participants</div><div class="a" style="left:453px;top:362px;width:66px;height:32px;background:transparent;border:4px solid #f8a826;box-shadow:inset 1px 1px 2px rgba(0,0,0,0.25), 1px 1px 2px rgba(0,0,0,0.25)"></div><svg class="a" style="left:468px;top:370px" width="14" height="16" viewBox="0 0 14 16"><circle cx="6.9" cy="5.1" r="3.1" fill="#2262b4"/><path d="M0.1 12.4 C0.1 10 2.4 9 6.9 9 C11.4 9 13.1 10 13.1 12.4 V13.8 H0.1 Z" fill="#2262b4"/></svg><div class="t" style="left:488.20px;top:373px;font-size:12.5px;color:#262626;font-weight:normal;transform:scaleX(1.0048);transform-origin:0 0">Add</div><svg class="a" style="left:521px;top:371px" width="15" height="15" viewBox="0 0 15 15"><path d="M1.5 1.5 L13 13 M13 1.5 L1.5 13" stroke="#1f5caa" stroke-width="1.7" stroke-linecap="round"/></svg><div class="t" style="left:539.68px;top:373px;font-size:12.5px;color:#262626;font-weight:normal;transform:scaleX(0.9171);transform-origin:0 0">Delete</div><div class="a" style="left:291px;top:393px;width:289px;height:1px;background:#d5d5d5;"></div><div class="a" style="left:291px;top:395px;width:288px;height:21px;background:#e6e6e6;"></div><svg class="a" style="left:293px;top:397px" width="14" height="16" viewBox="0 0 14 16"><circle cx="6.9" cy="5.1" r="3.1" fill="#2262b4"/><path d="M0.1 12.4 C0.1 10 2.4 9 6.9 9 C11.4 9 13.1 10 13.1 12.4 V13.8 H0.1 Z" fill="#2262b4"/></svg><div class="t" style="left:314.57px;top:401px;font-size:12.8px;color:#2b2b2b;font-weight:normal;transform:scaleX(1.0290);transform-origin:0 0">Dusan Scott</div><div class="t" style="left:517.54px;top:401px;font-size:12.8px;color:#2b2b2b;font-weight:normal;transform:scaleX(1.0609);transform-origin:0 0">2:30</div><svg class="a" style="left:553px;top:397px" width="17" height="17" viewBox="0 0 17 17"><circle cx="8.90" cy="8.70" r="7.25" fill="#fff" stroke="#1f4e8c" stroke-width="1.3"/><circle cx="8.90" cy="8.70" r="2.4" fill="#fff" stroke="#1f4e8c" stroke-width="1.3"/><rect x="8.15" y="1.10" width="1.5" height="5.30" fill="#1f4e8c"/></svg><svg class="a" style="left:293px;top:419px" width="14" height="16" viewBox="0 0 14 16"><circle cx="6.9" cy="5.1" r="3.1" fill="#2262b4"/><path d="M0.1 12.4 C0.1 10 2.4 9 6.9 9 C11.4 9 13.1 10 13.1 12.4 V13.8 H0.1 Z" fill="#2262b4"/></svg><div class="t" style="left:315.60px;top:423px;font-size:12.8px;color:#2b2b2b;font-weight:normal;transform:scaleX(1.0397);transform-origin:0 0">Jane Hunt</div><div class="t" style="left:517.54px;top:423px;font-size:12.8px;color:#2b2b2b;font-weight:normal;transform:scaleX(1.0609);transform-origin:0 0">3:45</div><svg class="a" style="left:553px;top:419px" width="17" height="17" viewBox="0 0 17 17"><circle cx="8.90" cy="8.70" r="7.25" fill="#fff" stroke="#1f4e8c" stroke-width="1.3"/><path d="M8.90 8.70 V1.45 A7.25 7.25 0 0 1 12.39 15.05 Z" fill="#3a75c8"/><circle cx="8.90" cy="8.70" r="2.4" fill="#fff" stroke="#1f4e8c" stroke-width="1.3"/><rect x="8.15" y="1.10" width="1.5" height="5.30" fill="#1f4e8c"/></svg><svg class="a" style="left:293px;top:441px" width="14" height="16" viewBox="0 0 14 16"><circle cx="6.9" cy="5.1" r="3.1" fill="#2262b4"/><path d="M0.1 12.4 C0.1 10 2.4 9 6.9 9 C11.4 9 13.1 10 13.1 12.4 V13.8 H0.1 Z" fill="#2262b4"/></svg><div class="t" style="left:315.60px;top:445px;font-size:12.8px;color:#2b2b2b;font-weight:normal;transform:scaleX(1.0028);transform-origin:0 0">Jonas Jones</div><div class="t" style="left:510.48px;top:445px;font-size:12.8px;color:#2b2b2b;font-weight:normal;transform:scaleX(1.0161);transform-origin:0 0">12:00</div><svg class="a" style="left:553px;top:441px" width="17" height="17" viewBox="0 0 17 17"><circle cx="8.90" cy="8.70" r="7.25" fill="#fff" stroke="#1f4e8c" stroke-width="1.3"/><path d="M8.90 8.70 V1.45 A7.25 7.25 0 0 1 12.39 15.05 Z" fill="#3a75c8"/><circle cx="8.90" cy="8.70" r="2.4" fill="#fff" stroke="#1f4e8c" stroke-width="1.3"/><rect x="8.15" y="1.10" width="1.5" height="5.30" fill="#1f4e8c"/></svg><svg class="a" style="left:293px;top:463px" width="14" height="16" viewBox="0 0 14 16"><circle cx="6.9" cy="5.1" r="3.1" fill="#2262b4"/><path d="M0.1 12.4 C0.1 10 2.4 9 6.9 9 C11.4 9 13.1 10 13.1 12.4 V13.8 H0.1 Z" fill="#2262b4"/></svg><div class="t" style="left:314.56px;top:467px;font-size:12.8px;color:#2b2b2b;font-weight:normal;transform:scaleX(1.0406);transform-origin:0 0">Kaya Tonks</div><div class="t" style="left:518.17px;top:467px;font-size:12.8px;color:#2b2b2b;font-weight:normal;transform:scaleX(1.0348);transform-origin:0 0">1:30</div><svg class="a" style="left:553px;top:463px" width="17" height="17" viewBox="0 0 17 17"><circle cx="8.90" cy="8.70" r="7.25" fill="#fff" stroke="#1f4e8c" stroke-width="1.3"/><path d="M8.90 8.70 V1.45 A7.25 7.25 0 0 1 13.86 13.99 Z" fill="#3a75c8"/><circle cx="8.90" cy="8.70" r="2.4" fill="#fff" stroke="#1f4e8c" stroke-width="1.3"/><rect x="8.15" y="1.10" width="1.5" height="5.30" fill="#1f4e8c"/></svg><svg class="a" style="left:293px;top:485px" width="14" height="16" viewBox="0 0 14 16"><circle cx="6.9" cy="5.1" r="3.1" fill="#2262b4"/><path d="M0.1 12.4 C0.1 10 2.4 9 6.9 9 C11.4 9 13.1 10 13.1 12.4 V13.8 H0.1 Z" fill="#2262b4"/></svg><div class="t" style="left:314.52px;top:489px;font-size:12.8px;color:#2b2b2b;font-weight:normal;transform:scaleX(1.0808);transform-origin:0 0">Marie Stokes</div><div class="t" style="left:517.54px;top:489px;font-size:12.8px;color:#2b2b2b;font-weight:normal;transform:scaleX(1.0609);transform-origin:0 0">2:45</div><svg class="a" style="left:553px;top:485px" width="17" height="17" viewBox="0 0 17 17"><circle cx="8.90" cy="8.70" r="7.25" fill="#3a75c8" stroke="#1f4e8c" stroke-width="1.3"/><circle cx="8.90" cy="8.70" r="2.4" fill="#fff" stroke="#1f4e8c" stroke-width="1.3"/><rect x="8.15" y="1.10" width="1.5" height="5.30" fill="#1f4e8c"/></svg><svg class="a" style="left:293px;top:507px" width="14" height="16" viewBox="0 0 14 16"><circle cx="6.9" cy="5.1" r="3.1" fill="#2262b4"/><path d="M0.1 12.4 C0.1 10 2.4 9 6.9 9 C11.4 9 13.1 10 13.1 12.4 V13.8 H0.1 Z" fill="#2262b4"/></svg><div class="t" style="left:314.55px;top:511px;font-size:12.8px;color:#2b2b2b;font-weight:normal;transform:scaleX(1.0545);transform-origin:0 0">Patrik Hicks</div><div class="t" style="left:517.54px;top:511px;font-size:12.8px;color:#2b2b2b;font-weight:normal;transform:scaleX(1.0609);transform-origin:0 0">2:15</div><svg class="a" style="left:553px;top:507px" width="17" height="17" viewBox="0 0 17 17"><circle cx="8.90" cy="8.70" r="7.25" fill="#fff" stroke="#1f4e8c" stroke-width="1.3"/><path d="M8.90 8.70 V1.45 A7.25 7.25 0 0 1 12.39 15.05 Z" fill="#3a75c8"/><circle cx="8.90" cy="8.70" r="2.4" fill="#fff" stroke="#1f4e8c" stroke-width="1.3"/><rect x="8.15" y="1.10" width="1.5" height="5.30" fill="#1f4e8c"/></svg><div class="a" style="left:592px;top:358px;width:78px;height:39px;background:#e5ebf4;"></div><div class="t" style="left:605.10px;top:372px;font-size:12.6px;color:#262626;font-weight:normal;transform:scaleX(0.8789);transform-origin:0 0">Tasks (15)</div><div class="a" style="left:679px;top:360px;width:126px;height:37px;background:#b5c7de;"></div><div class="t" style="left:689.28px;top:373px;font-size:12.6px;color:#262626;font-weight:normal;transform:scaleX(0.9236);transform-origin:0 0">Session Description</div><div class="a" style="left:815px;top:360px;width:151px;height:37px;background:#b5c7de;"></div><div class="t" style="left:825.26px;top:373px;font-size:12.6px;color:#262626;font-weight:normal;transform:scaleX(0.9363);transform-origin:0 0">Session Attachments (4)</div><div class="a" style="left:592px;top:397px;width:803px;height:21px;background:#e5ebf4;"></div><div class="a" style="left:817px;top:397px;width:1px;height:21px;background:#d0d8e2;"></div><div class="a" style="left:924px;top:397px;width:1px;height:21px;background:#d0d8e2;"></div><div class="a" style="left:1081px;top:397px;width:1px;height:21px;background:#d0d8e2;"></div><div class="a" style="left:1238px;top:397px;width:1px;height:21px;background:#d0d8e2;"></div><div class="t" style="left:681.31px;top:401px;font-size:12.6px;color:#333333;font-weight:normal;transform:scaleX(0.9906);transform-origin:0 0">Name</div><svg class="a" style="left:803px;top:403px" width="11" height="8" viewBox="0 0 11 8"><path d="M0.8 7 L5.4 1.2 L10 7 Z" fill="#8c8c8c"/></svg><div class="t" style="left:841.80px;top:401px;font-size:12.6px;color:#333333;font-weight:normal;transform:scaleX(0.9219);transform-origin:0 0">Time Spent</div><div class="t" style="left:986.18px;top:401px;font-size:12.6px;color:#333333;font-weight:normal;transform:scaleX(0.9235);transform-origin:0 0">Status</div><div class="t" style="left:1137.60px;top:401px;font-size:12.6px;color:#333333;font-weight:normal;transform:scaleX(0.9059);transform-origin:0 0">Assignee</div><div class="t" style="left:1297.42px;top:401px;font-size:12.6px;color:#333333;font-weight:normal;transform:scaleX(0.9842);transform-origin:0 0">Priority</div><div class="a" style="left:592px;top:418px;width:803px;height:127px;background:#ffffff;"></div><div class="a" style="left:592px;top:439px;width:803px;height:1px;background:#d9d9d9;"></div><div class="a" style="left:592px;top:460px;width:803px;height:1px;background:#d9d9d9;"></div><div class="a" style="left:592px;top:481px;width:803px;height:1px;background:#d9d9d9;"></div><div class="a" style="left:592px;top:502px;width:803px;height:1px;background:#d9d9d9;"></div><div class="a" style="left:592px;top:523px;width:803px;height:1px;background:#d9d9d9;"></div><div class="a" style="left:592px;top:544px;width:803px;height:1px;background:#d9d9d9;"></div><div class="a" style="left:592px;top:418px;width:803px;height:1px;background:#d9d9d9;"></div><div class="a" style="left:633px;top:418px;width:1px;height:127px;background:#d9d9d9;"></div><div class="a" style="left:817px;top:418px;width:1px;height:127px;background:#d9d9d9;"></div><div class="a" style="left:924px;top:418px;width:1px;height:127px;background:#d9d9d9;"></div><div class="a" style="left:1081px;top:418px;width:1px;height:127px;background:#d9d9d9;"></div><div class="a" style="left:1238px;top:418px;width:1px;height:127px;background:#d9d9d9;"></div><svg class="a" style="left:598px;top:425px" width="6" height="9" viewBox="0 0 6 9"><path d="M1 0.6 L4.8 4.4 L1 8.2 Z" fill="#6e6e6e"/></svg><svg class="a" style="left:610px;top:421px" width="17" height="17" viewBox="0 0 17 17"><rect x="0.65" y="3.65" width="14.7" height="11.7" fill="#fff" stroke="#1f4e8c" stroke-width="1.3"/><rect x="3" y="2" width="10" height="2.2" fill="#4d4d4d"/><rect x="5" y="0" width="6" height="2.2" fill="#4d4d4d"/><rect x="2.6" y="5.6" width="2.8" height="2.8" fill="#fff" stroke="#1f4e8c" stroke-width="1.2"/><rect x="2.6" y="10.6" width="2.8" height="2.8" fill="#fff" stroke="#1f4e8c" stroke-width="1.2"/><rect x="7.5" y="6" width="6.3" height="1" fill="#3a6db8"/><rect x="7.5" y="8" width="4.3" height="1" fill="#3a6db8"/><rect x="7.5" y="11" width="6.3" height="1" fill="#3a6db8"/><rect x="7.5" y="13" width="4.3" height="1" fill="#3a6db8"/></svg><div class="t" style="left:638.70px;top:423px;font-size:13.4px;color:#111111;font-weight:normal;transform:scaleX(0.9966);transform-origin:0 0">Add TestCases to Com.Rep...</div><div class="t" style="left:821.32px;top:423px;font-size:13.4px;color:#111111;font-weight:normal;transform:scaleX(0.9750);transform-origin:0 0">01:45</div><svg class="a" style="left:927px;top:421px" width="17" height="17" viewBox="0 0 17 17"><circle cx="8.00" cy="8.20" r="7.25" fill="#fff" stroke="#1f4e8c" stroke-width="1.3"/><circle cx="8.00" cy="8.20" r="2.4" fill="#fff" stroke="#1f4e8c" stroke-width="1.3"/><rect x="7.25" y="0.60" width="1.5" height="5.30" fill="#1f4e8c"/></svg><div class="t" style="left:948.54px;top:423px;font-size:13.4px;color:#111111;font-weight:normal;transform:scaleX(1.0596);transform-origin:0 0">Planned</div><div class="t" style="left:1085.17px;top:423px;font-size:13.4px;color:#111111;font-weight:normal;transform:scaleX(1.0261);transform-origin:0 0">Patrik Hicks</div><div class="t" style="left:1242.18px;top:423px;font-size:13.4px;color:#111111;font-weight:normal;transform:scaleX(1.1174);transform-origin:0 0">Medium</div><svg class="a" style="left:598px;top:446px" width="6" height="9" viewBox="0 0 6 9"><path d="M1 0.6 L4.8 4.4 L1 8.2 Z" fill="#6e6e6e"/></svg><svg class="a" style="left:610px;top:442px" width="17" height="17" viewBox="0 0 17 17"><rect x="0.65" y="3.65" width="14.7" height="11.7" fill="#fff" stroke="#1f4e8c" stroke-width="1.3"/><rect x="3" y="2" width="10" height="2.2" fill="#4d4d4d"/><rect x="5" y="0" width="6" height="2.2" fill="#4d4d4d"/><rect x="2.6" y="5.6" width="2.8" height="2.8" fill="#fff" stroke="#1f4e8c" stroke-width="1.2"/><rect x="2.6" y="10.6" width="2.8" height="2.8" fill="#fff" stroke="#1f4e8c" stroke-width="1.2"/><rect x="7.5" y="6" width="6.3" height="1" fill="#3a6db8"/><rect x="7.5" y="8" width="4.3" height="1" fill="#3a6db8"/><rect x="7.5" y="11" width="6.3" height="1" fill="#3a6db8"/><rect x="7.5" y="13" width="4.3" height="1" fill="#3a6db8"/></svg><div class="t" style="left:637.68px;top:444px;font-size:13.4px;color:#111111;font-weight:normal;transform:scaleX(1.0199);transform-origin:0 0">Create ExecutionList Deskt...</div><div class="t" style="left:821.32px;top:444px;font-size:13.4px;color:#111111;font-weight:normal;transform:scaleX(0.9750);transform-origin:0 0">01:00</div><svg class="a" style="left:927px;top:442px" width="17" height="17" viewBox="0 0 17 17"><circle cx="8.00" cy="8.20" r="7.25" fill="#2d6bbf" stroke="#1f4e8c" stroke-width="1.3"/><circle cx="8.00" cy="8.20" r="2.4" fill="#fff" stroke="#1f4e8c" stroke-width="1.3"/><rect x="7.25" y="0.60" width="1.5" height="5.30" fill="#1f4e8c"/></svg><div class="t" style="left:948.52px;top:444px;font-size:13.4px;color:#111111;font-weight:normal;transform:scaleX(1.0778);transform-origin:0 0">Completed</div><div class="t" style="left:1086.20px;top:444px;font-size:13.4px;color:#111111;font-weight:normal;transform:scaleX(0.9547);transform-origin:0 0">Jonas Jones</div><div class="t" style="left:1242.27px;top:444px;font-size:13.4px;color:#111111;font-weight:normal;transform:scaleX(1.0250);transform-origin:0 0">Low</div><svg class="a" style="left:598px;top:467px" width="6" height="9" viewBox="0 0 6 9"><path d="M1 0.6 L4.8 4.4 L1 8.2 Z" fill="#6e6e6e"/></svg><svg class="a" style="left:610px;top:463px" width="17" height="17" viewBox="0 0 17 17"><rect x="0.65" y="3.65" width="14.7" height="11.7" fill="#fff" stroke="#1f4e8c" stroke-width="1.3"/><rect x="3" y="2" width="10" height="2.2" fill="#4d4d4d"/><rect x="5" y="0" width="6" height="2.2" fill="#4d4d4d"/><rect x="2.6" y="5.6" width="2.8" height="2.8" fill="#fff" stroke="#1f4e8c" stroke-width="1.2"/><rect x="2.6" y="10.6" width="2.8" height="2.8" fill="#fff" stroke="#1f4e8c" stroke-width="1.2"/><rect x="7.5" y="6" width="6.3" height="1" fill="#3a6db8"/><rect x="7.5" y="8" width="4.3" height="1" fill="#3a6db8"/><rect x="7.5" y="11" width="6.3" height="1" fill="#3a6db8"/><rect x="7.5" y="13" width="4.3" height="1" fill="#3a6db8"/></svg><div class="t" style="left:637.66px;top:465px;font-size:13.4px;color:#111111;font-weight:normal;transform:scaleX(1.0412);transform-origin:0 0">Create ExecutionList Mobile</div><div class="t" style="left:821.32px;top:465px;font-size:13.4px;color:#111111;font-weight:normal;transform:scaleX(0.9750);transform-origin:0 0">01:30</div><svg class="a" style="left:927px;top:463px" width="17" height="17" viewBox="0 0 17 17"><circle cx="8.00" cy="8.20" r="7.25" fill="#2d6bbf" stroke="#1f4e8c" stroke-width="1.3"/><circle cx="8.00" cy="8.20" r="2.4" fill="#fff" stroke="#1f4e8c" stroke-width="1.3"/><rect x="7.25" y="0.60" width="1.5" height="5.30" fill="#1f4e8c"/></svg><div class="t" style="left:948.52px;top:465px;font-size:13.4px;color:#111111;font-weight:normal;transform:scaleX(1.0778);transform-origin:0 0">Completed</div><div class="t" style="left:1085.17px;top:465px;font-size:13.4px;color:#111111;font-weight:normal;transform:scaleX(1.0299);transform-origin:0 0">Marie Stokes</div><div class="t" style="left:1242.18px;top:465px;font-size:13.4px;color:#111111;font-weight:normal;transform:scaleX(1.1174);transform-origin:0 0">Medium</div><svg class="a" style="left:598px;top:488px" width="6" height="9" viewBox="0 0 6 9"><path d="M1 0.6 L4.8 4.4 L1 8.2 Z" fill="#6e6e6e"/></svg><svg class="a" style="left:610px;top:484px" width="17" height="17" viewBox="0 0 17 17"><rect x="0.65" y="3.65" width="14.7" height="11.7" fill="#fff" stroke="#1f4e8c" stroke-width="1.3"/><rect x="3" y="2" width="10" height="2.2" fill="#4d4d4d"/><rect x="5" y="0" width="6" height="2.2" fill="#4d4d4d"/><rect x="2.6" y="5.6" width="2.8" height="2.8" fill="#fff" stroke="#1f4e8c" stroke-width="1.2"/><rect x="2.6" y="10.6" width="2.8" height="2.8" fill="#fff" stroke="#1f4e8c" stroke-width="1.2"/><rect x="7.5" y="6" width="6.3" height="1" fill="#3a6db8"/><rect x="7.5" y="8" width="4.3" height="1" fill="#3a6db8"/><rect x="7.5" y="11" width="6.3" height="1" fill="#3a6db8"/><rect x="7.5" y="13" width="4.3" height="1" fill="#3a6db8"/></svg><div class="t" style="left:637.66px;top:486px;font-size:13.4px;color:#111111;font-weight:normal;transform:scaleX(1.0405);transform-origin:0 0">Create Requirements</div><div class="t" style="left:821.32px;top:486px;font-size:13.4px;color:#111111;font-weight:normal;transform:scaleX(0.9750);transform-origin:0 0">01:15</div><svg class="a" style="left:927px;top:484px" width="17" height="17" viewBox="0 0 17 17"><circle cx="8.00" cy="8.20" r="7.25" fill="#2d6bbf" stroke="#1f4e8c" stroke-width="1.3"/><circle cx="8.00" cy="8.20" r="2.4" fill="#fff" stroke="#1f4e8c" stroke-width="1.3"/><rect x="7.25" y="0.60" width="1.5" height="5.30" fill="#1f4e8c"/></svg><div class="t" style="left:948.52px;top:486px;font-size:13.4px;color:#111111;font-weight:normal;transform:scaleX(1.0778);transform-origin:0 0">Completed</div><div class="t" style="left:1086.20px;top:486px;font-size:13.4px;color:#111111;font-weight:normal;transform:scaleX(0.9934);transform-origin:0 0">Jane Hunt</div><div class="t" style="left:1242.18px;top:486px;font-size:13.4px;color:#111111;font-weight:normal;transform:scaleX(1.1174);transform-origin:0 0">Medium</div><svg class="a" style="left:598px;top:509px" width="6" height="9" viewBox="0 0 6 9"><path d="M1 0.6 L4.8 4.4 L1 8.2 Z" fill="#6e6e6e"/></svg><svg class="a" style="left:610px;top:504px" width="17" height="17" viewBox="0 0 17 17"><rect x="0.65" y="3.65" width="14.7" height="11.7" fill="#fff" stroke="#1f4e8c" stroke-width="1.3"/><rect x="3" y="2" width="10" height="2.2" fill="#4d4d4d"/><rect x="5" y="0" width="6" height="2.2" fill="#4d4d4d"/><rect x="2.6" y="5.6" width="2.8" height="2.8" fill="#fff" stroke="#1f4e8c" stroke-width="1.2"/><rect x="2.6" y="10.6" width="2.8" height="2.8" fill="#fff" stroke="#1f4e8c" stroke-width="1.2"/><rect x="7.5" y="6" width="6.3" height="1" fill="#3a6db8"/><rect x="7.5" y="8" width="4.3" height="1" fill="#3a6db8"/><rect x="7.5" y="11" width="6.3" height="1" fill="#3a6db8"/><rect x="7.5" y="13" width="4.3" height="1" fill="#3a6db8"/></svg><div class="t" style="left:637.71px;top:507px;font-size:13.4px;color:#111111;font-weight:normal;transform:scaleX(0.9895);transform-origin:0 0">Create TestCases</div><div class="t" style="left:821.32px;top:507px;font-size:13.4px;color:#111111;font-weight:normal;transform:scaleX(0.9750);transform-origin:0 0">00:30</div><svg class="a" style="left:927px;top:505px" width="17" height="17" viewBox="0 0 17 17"><circle cx="8.00" cy="8.20" r="7.25" fill="#2d6bbf" stroke="#1f4e8c" stroke-width="1.3"/><circle cx="8.00" cy="8.20" r="2.4" fill="#fff" stroke="#1f4e8c" stroke-width="1.3"/><rect x="7.25" y="0.60" width="1.5" height="5.30" fill="#1f4e8c"/></svg><div class="t" style="left:948.52px;top:507px;font-size:13.4px;color:#111111;font-weight:normal;transform:scaleX(1.0778);transform-origin:0 0">Completed</div><div class="t" style="left:1085.17px;top:507px;font-size:13.4px;color:#111111;font-weight:normal;transform:scaleX(1.0261);transform-origin:0 0">Patrik Hicks</div><div class="t" style="left:1242.18px;top:507px;font-size:13.4px;color:#111111;font-weight:normal;transform:scaleX(1.1174);transform-origin:0 0">Medium</div><svg class="a" style="left:610px;top:526px" width="17" height="17" viewBox="0 0 17 17"><rect x="0.65" y="3.65" width="14.7" height="11.7" fill="#fff" stroke="#1f4e8c" stroke-width="1.3"/><rect x="3" y="2" width="10" height="2.2" fill="#4d4d4d"/><rect x="5" y="0" width="6" height="2.2" fill="#4d4d4d"/><rect x="2.6" y="5.6" width="2.8" height="2.8" fill="#fff" stroke="#1f4e8c" stroke-width="1.2"/><rect x="2.6" y="10.6" width="2.8" height="2.8" fill="#fff" stroke="#1f4e8c" stroke-width="1.2"/><rect x="7.5" y="6" width="6.3" height="1" fill="#3a6db8"/><rect x="7.5" y="8" width="4.3" height="1" fill="#3a6db8"/><rect x="7.5" y="11" width="6.3" height="1" fill="#3a6db8"/><rect x="7.5" y="13" width="4.3" height="1" fill="#3a6db8"/></svg><div class="t" style="left:637.67px;top:528px;font-size:13.4px;color:#111111;font-weight:normal;transform:scaleX(1.0280);transform-origin:0 0">Do the Handover</div><div class="t" style="left:821.32px;top:528px;font-size:13.4px;color:#111111;font-weight:normal;transform:scaleX(0.9750);transform-origin:0 0">04:00</div><svg class="a" style="left:927px;top:526px" width="17" height="17" viewBox="0 0 17 17"><circle cx="8.00" cy="8.20" r="7.25" fill="#2d6bbf" stroke="#1f4e8c" stroke-width="1.3"/><circle cx="8.00" cy="8.20" r="2.4" fill="#fff" stroke="#1f4e8c" stroke-width="1.3"/><rect x="7.25" y="0.60" width="1.5" height="5.30" fill="#1f4e8c"/></svg><div class="t" style="left:948.52px;top:528px;font-size:13.4px;color:#111111;font-weight:normal;transform:scaleX(1.0778);transform-origin:0 0">Completed</div><div class="t" style="left:1086.20px;top:528px;font-size:13.4px;color:#111111;font-weight:normal;transform:scaleX(0.9547);transform-origin:0 0">Jonas Jones</div><div class="t" style="left:1242.24px;top:528px;font-size:13.4px;color:#111111;font-weight:normal;transform:scaleX(1.0577);transform-origin:0 0">High</div><div class="a" style="left:1401px;top:529px;width:1px;height:16px;background:#ffffff;"></div><div class="a" style="left:1404px;top:529px;width:1px;height:16px;background:#ffffff;"></div></body></html>
